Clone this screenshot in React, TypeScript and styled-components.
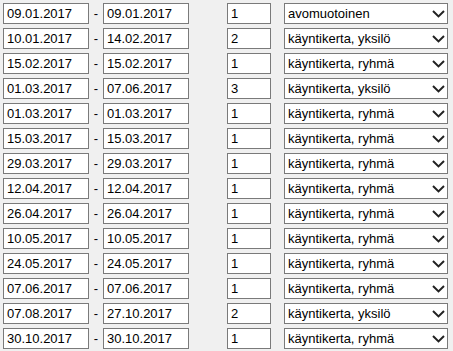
import styled, { createGlobalStyle } from "styled-components";

const GlobalStyle = createGlobalStyle`
  body {
    margin: 0;
    background: #f0f0f0;
    font-family: "Liberation Sans", Arial, sans-serif;
  }
`;

interface Period {
  start: string;
  end: string;
  count: number;
  kind: string;
}

const periods: Period[] = [
  { start: "09.01.2017", end: "09.01.2017", count: 1, kind: "avomuotoinen" },
  { start: "10.01.2017", end: "14.02.2017", count: 2, kind: "käyntikerta, yksilö" },
  { start: "15.02.2017", end: "15.02.2017", count: 1, kind: "käyntikerta, ryhmä" },
  { start: "01.03.2017", end: "07.06.2017", count: 3, kind: "käyntikerta, yksilö" },
  { start: "01.03.2017", end: "01.03.2017", count: 1, kind: "käyntikerta, ryhmä" },
  { start: "15.03.2017", end: "15.03.2017", count: 1, kind: "käyntikerta, ryhmä" },
  { start: "29.03.2017", end: "29.03.2017", count: 1, kind: "käyntikerta, ryhmä" },
  { start: "12.04.2017", end: "12.04.2017", count: 1, kind: "käyntikerta, ryhmä" },
  { start: "26.04.2017", end: "26.04.2017", count: 1, kind: "käyntikerta, ryhmä" },
  { start: "10.05.2017", end: "10.05.2017", count: 1, kind: "käyntikerta, ryhmä" },
  { start: "24.05.2017", end: "24.05.2017", count: 1, kind: "käyntikerta, ryhmä" },
  { start: "07.06.2017", end: "07.06.2017", count: 1, kind: "käyntikerta, ryhmä" },
  { start: "07.08.2017", end: "27.10.2017", count: 2, kind: "käyntikerta, yksilö" },
  { start: "30.10.2017", end: "30.10.2017", count: 1, kind: "käyntikerta, ryhmä" },
];

const kinds = ["avomuotoinen", "käyntikerta, yksilö", "käyntikerta, ryhmä"];

const List = styled.div`
  display: flex;
  flex-direction: column;
  gap: 4px;
  padding: 3px 0 0 3px;
`;

const Row = styled.div`
  display: flex;
  align-items: center;
  height: 21px;
`;

const Field = styled.input<{ $width: number; $offset?: number }>`
  box-sizing: border-box;
  width: ${(p) => p.$width}px;
  height: 21px;
  margin: 0 0 0 ${(p) => p.$offset ?? 0}px;
  padding: 0 3px;
  border: 1px solid #7a7a7a;
  border-radius: 0;
  background: #fff;
  color: #000;
  font-family: "Liberation Sans", Arial, sans-serif;
  font-size: 13px;
  outline: none;
`;

const Dash = styled.span`
  width: 14px;
  text-align: center;
  font-size: 13px;
  color: #000;
`;

const SelectBox = styled.div`
  position: relative;
  margin-left: 13px;
  width: 164px;
  height: 21px;
`;

const Select = styled.select`
  box-sizing: border-box;
  width: 100%;
  height: 100%;
  margin: 0;
  padding: 0 0 0 3px;
  border: 1px solid #7a7a7a;
  border-radius: 0;
  background: #fff;
  color: #000;
  font-family: "Liberation Sans", Arial, sans-serif;
  font-size: 13px;
  appearance: none;
  outline: none;
`;

const Chevron = styled.svg`
  position: absolute;
  right: 3px;
  top: 7px;
  pointer-events: none;
`;

export default function App() {
  return (
    <>
      <GlobalStyle />
      <List>
        {periods.map((p, i) => (
          <Row key={i}>
            <Field $width={86} readOnly value={p.start} />
            <Dash>-</Dash>
            <Field $width={86} readOnly value={p.end} />
            <Field $width={44} $offset={38} readOnly value={p.count} />
            <SelectBox>
              <Select value={p.kind} onChange={() => {}}>
                {kinds.map((k) => (
                  <option key={k}>{k}</option>
                ))}
              </Select>
              <Chevron width="13" height="8" viewBox="0 0 13 8">
                <path
                  d="M1 1 L6.5 6.4 L12 1"
                  fill="none"
                  stroke="#222"
                  strokeWidth="2"
                />
              </Chevron>
            </SelectBox>
          </Row>
        ))}
      </List>
    </>
  );
}
